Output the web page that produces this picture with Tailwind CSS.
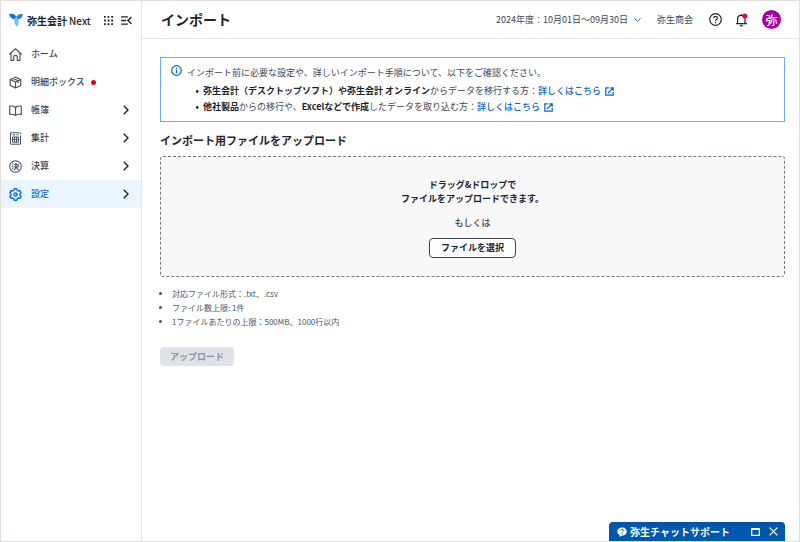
<!DOCTYPE html>
<html lang="ja">
<head>
  <meta charset="UTF-8">
  <meta name="viewport" content="width=device-width, initial-scale=1">
  <title>インポート - 弥生会計 Next</title>
  <script src="https://cdn.jsdelivr.net/npm/@tailwindcss/browser@4"></script>
</head>
<body class="font-['Noto_Sans_CJK_JP',sans-serif] text-[9px] text-[#3d4654]">
  <div class="min-h-screen flex bg-white border border-[#e4dfdc]">

    <!-- Sidebar -->
    <aside class="w-[141px] shrink-0 border-r border-[#e3e5e8]">
      <div class="h-[38px] flex items-center pl-2 pr-[9px]">
        <svg class="w-[14px] h-[14px]" viewBox="0 0 15 14">
          <path d="M0 .8C2.500 0 6 .4 7.800 3.200L8 6.800C4 6.600 1 4.400 0 .8z" fill="#1272d3"/>
          <path d="M15 1C12-.2 8.600 1.200 7.400 4.200L7.600 6.400C11.500 6.600 14.300 4.500 15 1z" fill="#1e88e5"/>
          <path d="M6.500 4.400C8 3.600 9.500 4.600 10 6.500C10.600 9 10.500 12 9 14C6 13 4.800 8 6.500 4.400z" fill="#6cc4f7"/>
        </svg>
        <span class="ml-1 text-[10px] font-bold text-[#1c2430] whitespace-nowrap">弥生会計<span class="ml-0.5 font-medium">Next</span></span>
        <button class="ml-auto" aria-label="アプリ一覧">
          <svg class="w-[9px] h-[9px]" viewBox="0 0 10 10" fill="#1c2430">
            <path d="M0 0h2v2H0zM4 0h2v2H4zM8 0h2v2H8zM0 4h2v2H0zM4 4h2v2H4zM8 4h2v2H8zM0 8h2v2H0zM4 8h2v2H4zM8 8h2v2H8z"/>
          </svg>
        </button>
        <button class="ml-2" aria-label="メニューを閉じる">
          <svg class="w-[11px] h-[9px]" viewBox="0 0 12 10" fill="none" stroke="#1c2430" stroke-width="1.500">
            <path d="M0 1h7.500M0 5h5.500M0 9h7.500M11.500 1L7.500 5l4 4"/>
          </svg>
        </button>
      </div>
      <nav class="pt-px text-[9px] font-medium">
        <a href="#" class="h-7 flex items-center pl-2 pr-3">
          <svg class="w-[13px] h-[13px] mr-[9px]" viewBox="0 0 13 13" fill="none" stroke="#4a5565" stroke-width="1.200" stroke-linejoin="round" stroke-linecap="round">
            <path d="M.7 6L6.500 .8L12.300 6M2 5.200V12.300H4.700V8.800Q4.700 7.300 6.500 7.300T8.300 8.800V12.300H11V5.200"/>
          </svg>
          ホーム
        </a>
        <a href="#" class="h-7 flex items-center pl-2 pr-3">
          <svg class="w-[13px] h-[13px] mr-[9px]" viewBox="0 0 13 13" fill="none" stroke="#4a5565" stroke-width="1.200" stroke-linejoin="round">
            <path d="M6.500 1.200L11.800 3.500V9.500L6.500 12L1.200 9.500V3.500zM1.200 3.500L6.500 6L11.800 3.500M6.500 6V12M3.800 2.400L9.200 4.800V7"/>
          </svg>
          明細ボックス
          <span class="ml-[6px] w-[5px] h-[5px] rounded-full bg-[#e6002d]"></span>
        </a>
        <a href="#" class="h-7 flex items-center pl-2 pr-3">
          <svg class="w-[13px] h-[13px] mr-[9px]" viewBox="0 0 13 13" fill="none" stroke="#4a5565" stroke-width="1.200" stroke-linejoin="round">
            <path d="M6.500 4V11.500C5 10.300 3 10 .7 10.500V2H3Q6 2 6.500 4Q7 2 10 2H12.300V10.500C10 10 8 10.300 6.500 11.500"/>
          </svg>
          帳簿
          <svg class="ml-auto w-[6px] h-[10px]" viewBox="0 0 6 10" fill="none" stroke="#1c2430" stroke-width="1.400"><path d="M.7 .8L5 5L.7 9.200"/></svg>
        </a>
        <a href="#" class="h-7 flex items-center pl-2 pr-3">
          <svg class="w-[13px] h-[13px] mr-[9px]" viewBox="0 0 13 13" fill="none" stroke="#4a5565" stroke-width="1">
            <path d="M10.500 .8H1.500V12.200H11.500V3.500M11.500 .8V2.200M3.500 2.800H6M7.500 2.800H9.500M3.500 5H9.500V10.200H3.500zM3.500 7.500H9.500M5.500 5V10.200M7.500 5V10.200"/>
          </svg>
          集計
          <svg class="ml-auto w-[6px] h-[10px]" viewBox="0 0 6 10" fill="none" stroke="#1c2430" stroke-width="1.400"><path d="M.7 .8L5 5L.7 9.200"/></svg>
        </a>
        <a href="#" class="h-7 flex items-center pl-2 pr-3">
          <svg class="w-[13px] h-[13px] mr-[9px]" viewBox="0 0 13 13" fill="none" stroke="#4a5565" stroke-width="1.100">
            <circle cx="6.500" cy="6.500" r="5.800"/>
            <path d="M3.300 3.600L4.300 4.400M2.800 5.800L3.900 6.500M3 9.300L4.300 7.500M5 4.500H9.200V6.700M4.700 6.700H10.200M7 3V6.700Q6.500 9 4.900 9.900M7.300 7Q8 9 9.800 9.700"/>
          </svg>
          決算
          <svg class="ml-auto w-[6px] h-[10px]" viewBox="0 0 6 10" fill="none" stroke="#1c2430" stroke-width="1.400"><path d="M.7 .8L5 5L.7 9.200"/></svg>
        </a>
        <a href="#" class="h-7 flex items-center pl-2 pr-3 bg-[#ebf5ff] text-[#0a6ddc]" aria-current="page">
          <svg class="w-[13px] h-[13px] mr-[9px]" viewBox="0 0 13 13" fill="none" stroke="#0a6ddc" stroke-width="1.400" stroke-linejoin="round">
            <path d="M5.300 .8H7.700L8.200 2.400L9.200 3L10.900 2.600L12.100 4.700L10.900 5.900V7.100L12.100 8.300L10.900 10.400L9.200 10L8.200 10.600L7.700 12.200H5.300L4.800 10.600L3.800 10L2.100 10.400L.9 8.300L2.100 7.100V5.900L.9 4.700L2.100 2.600L3.800 3L4.800 2.400z"/>
            <circle cx="6.500" cy="6.500" r="1.500"/>
          </svg>
          設定
          <svg class="ml-auto w-[6px] h-[10px]" viewBox="0 0 6 10" fill="none" stroke="#1c2430" stroke-width="1.400"><path d="M.7 .8L5 5L.7 9.200"/></svg>
        </a>
      </nav>
    </aside>

    <div class="flex-1 min-w-0">
      <!-- Header -->
      <header class="h-[38px] flex items-center pl-[19px] pr-[18px] border-b border-[#e6e6e6]">
        <h1 class="text-[14px] font-bold text-[#1c2430]">インポート</h1>
        <button class="ml-auto flex items-center gap-[6px]">
          2024年度：10月01日～09月30日
          <svg class="w-[7px] h-[4px]" viewBox="0 0 7 4" fill="none" stroke="#4a5565"><path d="M.5 .4L3.500 3.300L6.500 .4"/></svg>
        </button>
        <span class="ml-4">弥生商会</span>
        <button class="ml-4" aria-label="ヘルプ">
          <svg class="w-[13px] h-[13px]" viewBox="0 0 13 13" fill="none" stroke="#1c2430" stroke-width="1.200">
            <circle cx="6.500" cy="6.500" r="5.800"/>
            <path d="M4.600 5.200Q4.600 3.400 6.500 3.400T8.400 5.100Q8.400 6 7.400 6.600Q6.500 7.100 6.500 8M6.500 8.900V10.200"/>
          </svg>
        </button>
        <button class="ml-[13px]" aria-label="お知らせ">
          <svg class="w-[13px] h-[14px]" viewBox="0 0 13 14" fill="none" stroke="#1c2430" stroke-width="1.200">
            <path d="M1 10.700H12M2.600 10.700V6Q2.600 2.400 6.300 2.400T10 6V10.700M6.300 2.400V.9" />
            <path d="M5 12.600H7.600" stroke-width="1.500"/>
            <circle cx="9.700" cy="3" r="2.500" fill="#f5002f" stroke="none"/>
          </svg>
        </button>
        <button class="ml-[14px] w-[19px] h-[19px] rounded-full bg-[#a3009f] text-white text-[12px] leading-[18px] font-medium">弥</button>
      </header>

      <main class="pl-[18px] pr-[14px] pt-[18px] pb-10">
        <!-- Notice -->
        <section class="flex h-[65px] pl-[10px] pt-[7px] border border-[#6aabf2] leading-4">
          <svg class="w-[11px] h-[11px] shrink-0 mr-[5px]" viewBox="0 0 11 11" fill="none" stroke="#0a63cf" stroke-width="1.200">
            <circle cx="5.500" cy="5.500" r="4.800"/>
            <path d="M5.500 4.800V8.200M5.500 2.700V3.900"/>
          </svg>
          <div>
            <p>インポート前に必要な設定や、詳しいインポート手順について、以下をご確認ください。</p>
            <ul class="list-['•__'] pl-4 pt-0.5 marker:font-bold marker:text-[#1c2430]">
              <li><b class="text-[#1c2430]">弥生会計（デスクトップソフト）や弥生会計 オンライン</b>からデータを移行する方：<a href="#" class="font-medium text-[#0a63cf]">詳しくはこちら<svg class="inline align-middle ml-1 w-[9px] h-[9px]" viewBox="0 0 9 9" fill="none" stroke="#0a63cf" stroke-width="1.200"><path d="M4 .8H.8V8.200H8.200V5M5.300 .8H8.200V3.700M8.200 .8L3 6"/></svg></a></li>
              <li><b class="text-[#1c2430]">他社製品</b>からの移行や、<b class="text-[#1c2430]">Excelなどで作成</b>したデータを取り込む方：<a href="#" class="font-medium text-[#0a63cf]">詳しくはこちら<svg class="inline align-middle ml-1 w-[9px] h-[9px]" viewBox="0 0 9 9" fill="none" stroke="#0a63cf" stroke-width="1.200"><path d="M4 .8H.8V8.200H8.200V5M5.300 .8H8.200V3.700M8.200 .8L3 6"/></svg></a></li>
            </ul>
          </div>
        </section>

        <h2 class="mt-[10px] text-[11px] leading-4 font-bold text-[#1c2430]">インポート用ファイルをアップロード</h2>

        <!-- Drop area -->
        <section class="mt-2 h-[121px] flex flex-col items-center pt-[21px] rounded-[3px] border border-dashed border-[#737b89] bg-[#f8f8f8]">
          <p class="text-center font-bold leading-[14px] text-[#1c2430]">ドラッグ&amp;ドロップで<br>ファイルをアップロードできます。</p>
          <p class="mt-[10px] leading-[14px] font-medium">もしくは</p>
          <button class="mt-2 h-5 px-[11px] rounded-[4px] border border-[#3d4654] bg-white font-bold text-[#1c2430]">ファイルを選択</button>
        </section>

        <ul class="mt-[10px] list-disc pl-3 text-[8px] leading-[14px] text-[#4a5565]">
          <li>対応ファイル形式：.txt、.csv</li>
          <li>ファイル数上限: 1件</li>
          <li>1ファイルあたりの上限：500MB、1000行以内</li>
        </ul>

        <button disabled class="mt-[18px] h-[19px] px-[10px] rounded-[4px] bg-[#dfe2e6] font-bold text-[#8b93a0]">アップロード</button>
      </main>
    </div>
  </div>

  <!-- Chat support bar -->
  <div class="fixed bottom-px right-[15px] w-[176px] h-[19px] flex items-center pl-2 pr-[7px] rounded-t-[4px] bg-[#0057ab] text-white">
    <svg class="w-[10px] h-[10px]" viewBox="0 0 10 10">
      <path d="M5.200 .5C8 .5 9.800 2.200 9.800 4.500S8 8.500 5.500 8.500L2.500 9.800V7.900C1 7.200 .3 6 .3 4.500C.3 2.200 2.400 .5 5.200 .5z" fill="#fff"/>
      <path d="M3.800 3.600Q3.900 2.400 5.200 2.400T6.500 3.500Q6.500 4.100 5.800 4.500Q5.200 4.900 5.200 5.500M5.200 6.200V7.200" fill="none" stroke="#0057ab"/>
    </svg>
    <span class="ml-[3px] text-[10px] leading-4 font-bold whitespace-nowrap">弥生チャットサポート</span>
    <button class="ml-auto" aria-label="拡大">
      <svg class="w-[9px] h-[8px]" viewBox="0 0 9 8" fill="none" stroke="#fff" stroke-width="1.200"><path d="M.7 .7H8.300V7.300H.7zM.7 1.400H8.300"/></svg>
    </button>
    <button class="ml-[9px]" aria-label="閉じる">
      <svg class="w-[9px] h-[9px]" viewBox="0 0 9 9" fill="none" stroke="#fff" stroke-width="1.300"><path d="M.6 .6L8.400 8.400M8.400 .6L.6 8.400"/></svg>
    </button>
  </div>
</body>
</html>
